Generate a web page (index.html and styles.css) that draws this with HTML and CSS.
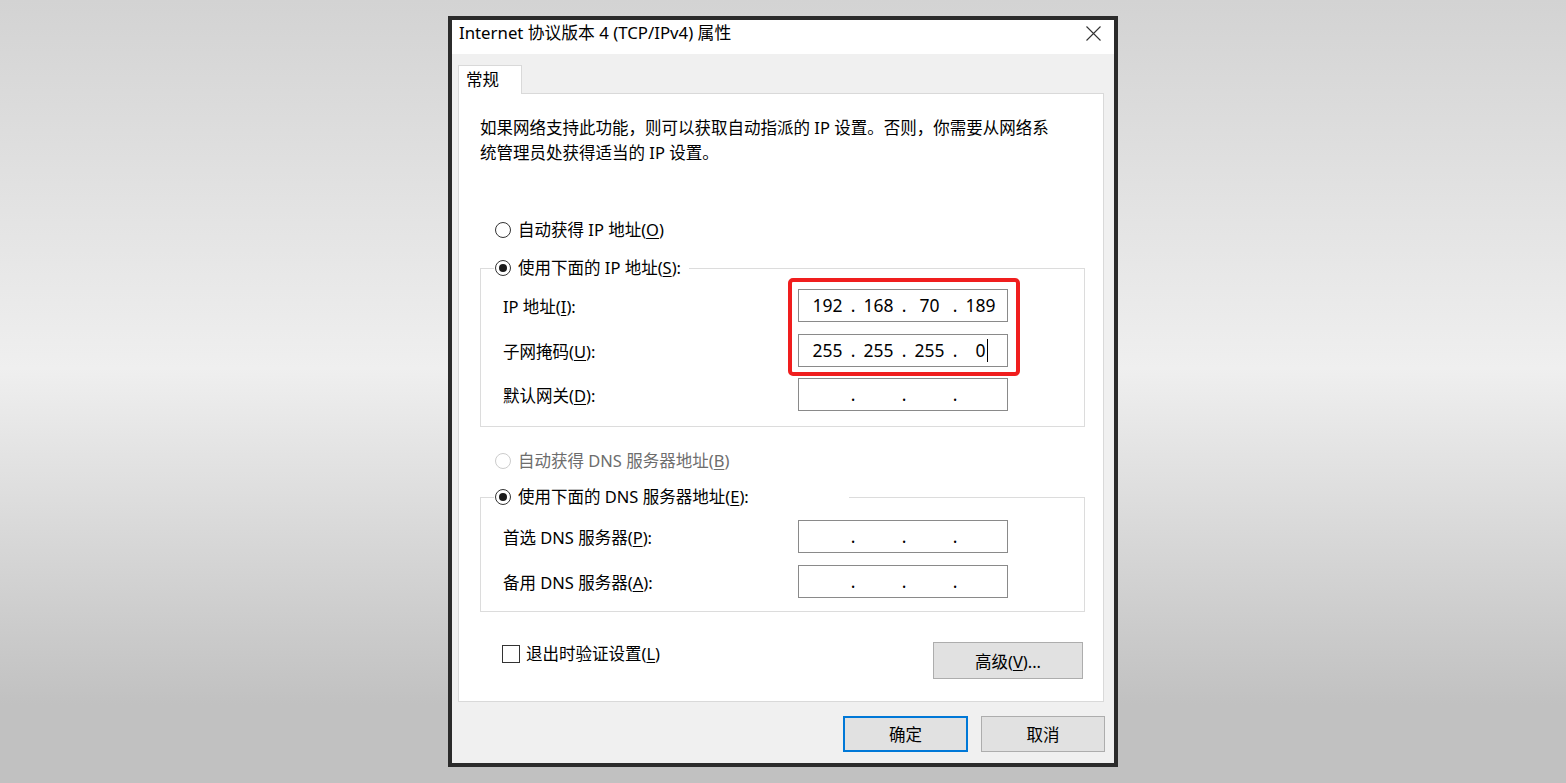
FILE: index.html
```html
<!DOCTYPE html>
<html lang="zh-CN">
<head>
  <meta charset="UTF-8" />
  <title>Internet 协议版本 4 (TCP/IPv4) 属性</title>
  <link rel="stylesheet" href="styles.css">
</head>
<body>
  <div class="dialog">
    <div class="titlebar">
      <span class="title">Internet 协议版本 4 (TCP/IPv4) 属性</span>
      <svg class="close" width="15" height="15" viewBox="0 0 15 15">
        <path d="M0.5 0.5L14.5 14.5M14.5 0.5L0.5 14.5" stroke="#333" stroke-width="1.1" fill="none"/>
      </svg>
    </div>
    <div class="body">
      <div class="tabs">
        <div class="tab">常规</div>
      </div>
      <div class="panel">
        <p class="desc">如果网络支持此功能，则可以获取自动指派的 IP 设置。否则，你需要从网络系<br>统管理员处获得适当的 IP 设置。</p>

        <label class="radio first"><span class="dot"></span>自动获得 IP 地址(<u>O</u>)</label>
        <fieldset class="group ip-group">
          <legend><label class="radio checked"><span class="dot"></span>使用下面的 IP 地址(<u>S</u>):</label></legend>
          <div class="marked">
            <div class="row">
              <span>IP 地址(<u>I</u>):</span>
              <div class="ip"><span>192</span><i>.</i><span>168</span><i>.</i><span>70</span><i>.</i><span>189</span></div>
            </div>
            <div class="row">
              <span>子网掩码(<u>U</u>):</span>
              <div class="ip"><span>255</span><i>.</i><span>255</span><i>.</i><span>255</span><i>.</i><span>0<b class="caret"></b></span></div>
            </div>
            <div class="highlight"></div>
          </div>
          <div class="row">
            <span>默认网关(<u>D</u>):</span>
            <div class="ip"><span></span><i>.</i><span></span><i>.</i><span></span><i>.</i><span></span></div>
          </div>
        </fieldset>

        <label class="radio disabled dns-auto"><span class="dot"></span>自动获得 DNS 服务器地址(<u>B</u>)</label>
        <fieldset class="group dns-group">
          <legend><label class="radio checked"><span class="dot"></span>使用下面的 DNS 服务器地址(<u>E</u>):</label></legend>
          <div class="row">
            <span>首选 DNS 服务器(<u>P</u>):</span>
            <div class="ip"><span></span><i>.</i><span></span><i>.</i><span></span><i>.</i><span></span></div>
          </div>
          <div class="row">
            <span>备用 DNS 服务器(<u>A</u>):</span>
            <div class="ip"><span></span><i>.</i><span></span><i>.</i><span></span><i>.</i><span></span></div>
          </div>
        </fieldset>

        <div class="panel-actions">
          <label class="check"><span class="box"></span>退出时验证设置(<u>L</u>)</label>
          <button class="btn advanced">高级(<u>V</u>)...</button>
        </div>
      </div>
      <div class="footer">
        <button class="btn ok">确定</button>
        <button class="btn">取消</button>
      </div>
    </div>
  </div>
</body>
</html>
```

FILE: styles.css
```css
body {
  margin: 0;
  height: 783px;
  background: linear-gradient(#d3d3d3 0%, #efefef 47%, #c1c1c1 90%, #c1c1c1 100%);
  display: flex;
  align-items: center;
  justify-content: center;
  font-family: "Noto Sans", "Noto Sans CJK SC", sans-serif;
  font-size: 16.5px;
  color: #000;
}
u {
  text-decoration-thickness: 1px;
  text-underline-offset: 2px;
}
.dialog {
  width: 670px;
  height: 751px;
  box-sizing: border-box;
  border: 4px solid #2b2b2b;
  background: #f0f0f0;
  display: flex;
  flex-direction: column;
}
.titlebar {
  height: 34px;
  box-sizing: border-box;
  background: #fff;
  display: flex;
  align-items: center;
  justify-content: space-between;
  padding: 0 13px 8px 7px;
}
.title {
  line-height: 24px;
  font-size: 16.8px;
}
.body {
  flex: 1;
  padding: 11px 10px 0 6px;
  display: flex;
  flex-direction: column;
}
.tabs {
  display: flex;
  height: 29px;
  margin-bottom: -1px;
  position: relative;
  z-index: 1;
}
.tab {
  width: 64px;
  box-sizing: border-box;
  border: 1px solid #d9d9d9;
  border-bottom: none;
  background: #fff;
  padding-left: 7px;
  line-height: 28px;
}
.panel {
  height: 609px;
  box-sizing: border-box;
  border: 1px solid #d9d9d9;
  background: #fff;
  padding: 21px 18px 0 21px;
}
.desc {
  margin: 0;
  line-height: 25px;
}
.radio {
  display: flex;
  align-items: center;
  line-height: 24px;
  white-space: nowrap;
}
.radio .dot {
  width: 16px;
  height: 16px;
  box-sizing: border-box;
  border: 1px solid #333;
  border-radius: 50%;
  background: #fff;
  margin-right: 7px;
  display: flex;
  align-items: center;
  justify-content: center;
}
.radio.checked .dot::after {
  content: "";
  width: 8px;
  height: 8px;
  border-radius: 50%;
  background: #1a1a1a;
}
.radio.disabled {
  color: #6d6d6d;
}
.radio.disabled .dot {
  border-color: #cccccc;
}
.first {
  margin: 53px 0 0 15px;
}
.group {
  margin: 14px 0 0 0;
  padding: 0 76px 15px 13px;
  border: 1px solid #dcdcdc;
  min-inline-size: 0;
}
.group legend {
  padding: 0 8px 0 1px;
}
.dns-group legend {
  padding-right: 100px;
}
.group .row {
  margin-left: 9px;
}
.row {
  display: grid;
  grid-template-columns: 1fr 210px;
  align-items: center;
  height: 33px;
}
.marked {
  position: relative;
  margin-top: 9px;
  display: flex;
  flex-direction: column;
  gap: 12px;
}
.marked + .row {
  margin-top: 11px;
}
.highlight {
  position: absolute;
  top: -11px;
  bottom: -9px;
  right: -12px;
  width: 232px;
  box-sizing: border-box;
  border: 4px solid #f01e1e;
  border-radius: 5px;
}
.ip {
  height: 33px;
  box-sizing: border-box;
  border: 1px solid #8a8a8a;
  padding: 0 0 2px 6px;
  display: flex;
  align-items: center;
  font-size: 17.5px;
}
.ip span {
  width: 45px;
  text-align: center;
  position: relative;
}
.ip i {
  width: 6px;
  font-style: normal;
  text-align: center;
}
.caret {
  position: absolute;
  top: 1px;
  bottom: 0;
  margin-left: 1px;
  width: 1px;
  background: #000;
}
.dns-auto {
  margin: 22px 0 0 15px;
}
.dns-group {
  margin-top: 12px;
  padding-bottom: 13px;
}
.dns-group .row:first-of-type {
  margin-top: 11px;
}
.dns-group .row + .row {
  margin-top: 12px;
}
.panel-actions {
  margin-top: 30px;
  padding-left: 22px;
  display: flex;
  justify-content: space-between;
  align-items: flex-start;
}
.check {
  display: flex;
  align-items: center;
  line-height: 24px;
}
.check .box {
  width: 18px;
  height: 18px;
  box-sizing: border-box;
  border: 1px solid #333;
  background: #fff;
  margin-right: 6px;
}
.btn {
  font: inherit;
  color: #000;
  background: #e1e1e1;
  border: 1px solid #adadad;
  height: 36px;
  width: 124px;
  padding: 0;
}
.advanced {
  width: 150px;
  height: 37px;
  margin-right: 2px;
}
.footer {
  margin-top: 14px;
  margin-right: -1px;
  display: flex;
  justify-content: flex-end;
  gap: 13px;
}
.ok {
  width: 125px;
  border: 2px solid #0078d7;
}
```
